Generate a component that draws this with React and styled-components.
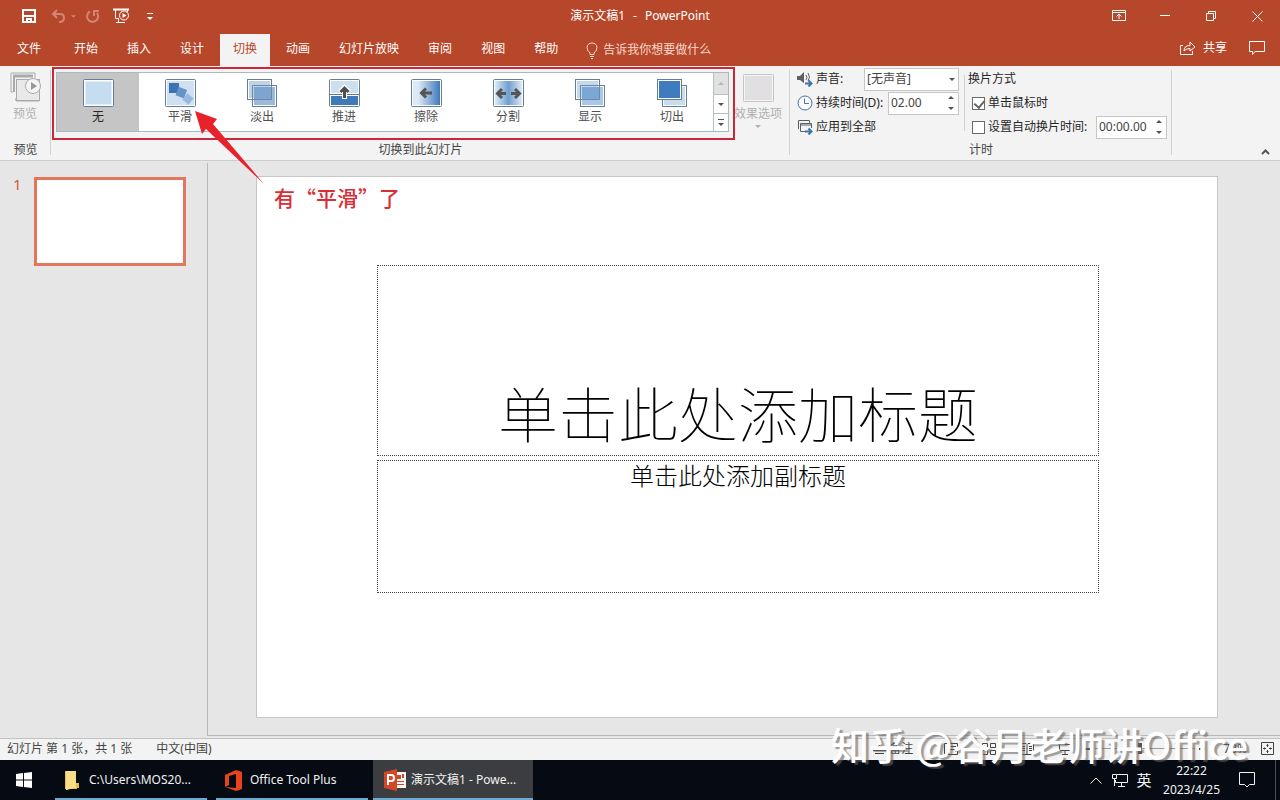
import React from "react";
import styled, { createGlobalStyle } from "styled-components";

const GlobalStyle = createGlobalStyle`
    * {
        box-sizing: border-box;
    }
    body {
        margin: 0;
        background: #e6e6e6;
        font: 12px/16px "Noto Sans", "Noto Sans CJK SC", sans-serif;
        color: #333333;
    }
    button, input, select {
        font: inherit;
        color: inherit;
        margin: 0;
        padding: 0;
        border: 0;
        background: none;
        border-radius: 0;
    }
    svg {
        display: block;
        flex: none;
    }
`;

const Window = styled.div`
    display: flex;
    flex-direction: column;
    min-height: 100vh;
`;

/* ---------- title bar ---------- */

const TitleBar = styled.header`
    display: grid;
    grid-template-columns: 1fr auto 1fr;
    align-items: center;
    height: 32px;
    background: #b7472a;
    color: #ffffff;
`;

const QuickAccess = styled.div`
    display: flex;
    align-items: center;
    padding-left: 21px;
`;

const QuickButton = styled.button`
    display: flex;
    justify-content: center;
    width: ${(p) => p.$width || 16}px;
    margin-right: ${(p) => p.$gap || 0}px;
    opacity: ${(p) => (p.disabled ? 0.35 : 1)};
`;

const DocTitle = styled.h1`
    display: flex;
    gap: 8px;
    margin: 0;
    font-size: 12px;
    font-weight: 400;
`;

const WindowControls = styled.div`
    display: flex;
    justify-content: flex-end;
`;

const WindowButton = styled.button`
    display: flex;
    align-items: center;
    justify-content: center;
    width: 46px;
    height: 32px;
`;

/* ---------- tabs ---------- */

const TabBar = styled.nav`
    display: flex;
    align-items: stretch;
    gap: 3px;
    height: 34px;
    padding-top: 2px;
    background: #b7472a;
    color: #ffffff;
`;

const Tab = styled.button`
    padding: 0 ${(p) => (p.$file ? 17 : 13)}px 2px;
    background: ${(p) => (p.$active ? "#f3f3f3" : "transparent")};
    color: ${(p) => (p.$active ? "#b7472a" : "#ffffff")};
    white-space: nowrap;
`;

const TellMe = styled.button`
    display: flex;
    align-items: center;
    gap: 5px;
    margin-left: 12px;
    color: #f6d9cf;
    white-space: nowrap;
`;

const TabActions = styled.div`
    display: flex;
    align-items: center;
    gap: 22px;
    margin-left: auto;
    padding: 0 15px 4px 0;
`;

const ActionButton = styled.button`
    display: flex;
    align-items: center;
    gap: 7px;
`;

/* ---------- ribbon ---------- */

const Ribbon = styled.section`
    display: flex;
    height: 95px;
    background: #f3f3f3;
    border-bottom: 1px solid #cccccc;
`;

const Group = styled.div`
    display: flex;
    flex-direction: column;
    justify-content: space-between;
    position: relative;
    width: ${(p) => p.$width}px;
    padding: ${(p) => p.$top || 6}px 0 2px;

    &::after {
        content: "";
        position: absolute;
        right: 0;
        top: 4px;
        bottom: 5px;
        width: 1px;
        background: #d2d2d2;
    }
`;

const GroupName = styled.div`
    color: #444444;
    text-align: center;
`;

const BigButton = styled.button`
    display: flex;
    flex-direction: column;
    align-items: center;
    gap: 3px;
    width: 50px;
    color: #b0b0b0;
    white-space: nowrap;
`;

const GalleryRow = styled.div`
    display: flex;
    gap: 4px;
    padding-left: 5px;
`;

const GalleryWrap = styled.div`
    position: relative;
`;

const Gallery = styled.div`
    display: flex;
    height: 60px;
    border: 1px solid #a9bcbc;
    background: #ffffff;
`;

const GalleryItem = styled.button`
    display: flex;
    flex-direction: column;
    align-items: center;
    gap: 2px;
    width: 82px;
    padding-top: 6px;
    background: ${(p) => (p.$active ? "#c5c5c5" : "transparent")};
    color: ${(p) => (p.$active ? "#262626" : "#505050")};
`;

const GalleryScroll = styled.div`
    display: grid;
    grid-template-rows: 21px 19px 18px;
    width: 15px;
    border-left: 1px solid #b6c2c2;
`;

const ScrollButton = styled.button`
    display: flex;
    align-items: center;
    justify-content: center;
    background: ${(p) => (p.disabled ? "#e1e1e1" : "#ffffff")};
    color: ${(p) => (p.disabled ? "#b5b5b5" : "#555555")};

    & + & {
        border-top: 1px solid #b6c2c2;
    }
`;

const HighlightFrame = styled.div`
    position: absolute;
    inset: -5px -6px -8px -4px;
    border: 2px solid #c8283a;
    pointer-events: none;
`;

const HighlightArrow = styled.svg`
    position: absolute;
    left: 136px;
    top: 38px;
    z-index: 2;
    pointer-events: none;
`;

const Timing = styled.div`
    display: flex;
    color: #262626;
    white-space: nowrap;
`;

const TimingColumn = styled.div`
    display: flex;
    flex-direction: column;
    padding: 0 5px 0 7px;
    width: ${(p) => p.$width}px;

    & ~ & {
        padding: 0 0 0 3px;
    }
`;

const TimingDivider = styled.div`
    width: 1px;
    margin: 8px 0;
    background: #d2d2d2;
`;

const TimingRow = styled.div`
    display: flex;
    align-items: center;
    gap: 3px;
    height: 24px;
    padding-left: ${(p) => p.$indent || 0}px;
`;

const PlainButton = styled.button`
    display: flex;
    align-items: center;
    gap: 3px;
`;

const Field = styled.div`
    display: flex;
    position: relative;
    width: ${(p) => p.$width}px;
    height: 23px;
    margin-left: auto;
    background: #ffffff;
    border: 1px solid #c6c6c6;

    input, select {
        width: 100%;
        padding-left: 2px;
        appearance: none;
        color: #444444;
        outline: none;
    }
`;

const SelectArrow = styled.span`
    position: absolute;
    right: 3px;
    top: 9px;
    color: #555555;
    pointer-events: none;
`;

const Stepper = styled.div`
    display: grid;
    flex: none;
    grid-template-rows: 1fr 1fr;
    width: 15px;
    color: #555555;

    button {
        display: flex;
        align-items: center;
        justify-content: center;
    }
`;

const Check = styled.input`
    appearance: none;
    flex: none;
    position: relative;
    width: 13px;
    height: 13px;
    background: #ffffff;
    border: 1px solid #6a6a6a;

    &:checked::after {
        content: "";
        position: absolute;
        left: 3px;
        top: 0;
        width: 5px;
        height: 8px;
        border: solid #666666;
        border-width: 0 2px 2px 0;
        transform: rotate(40deg);
    }
`;

const CollapseButton = styled.button`
    align-self: flex-end;
    margin-left: auto;
    padding: 0 10px 5px;
    color: #555555;
`;

/* ---------- workspace ---------- */

const Workspace = styled.main`
    display: flex;
    flex: 1;
    padding: 2px 0;
    background: #e6e6e6;
`;

const Thumbnails = styled.aside`
    display: flex;
    align-items: flex-start;
    gap: 13px;
    width: 207px;
    padding: 14px 21px 0 13px;
`;

const ThumbNumber = styled.span`
    width: 8px;
    font-size: 15px;
    line-height: 14px;
    color: #cf5a40;
`;

const Thumb = styled.button`
    flex: 1;
    height: 89px;
    background: #ffffff;
    border: 3px solid #e4775b;
`;

const SlidePane = styled.section`
    display: flex;
    flex: 1;
    padding: 13px 62px 17px 48px;
    border: solid #b9b9b9;
    border-width: 0 0 1px 1px;
`;

const Slide = styled.div`
    position: relative;
    display: flex;
    flex: 1;
    flex-direction: column;
    gap: 4px;
    padding: 88px 118px 124px 120px;
    background: #ffffff;
    border: 1px solid #c6c6c6;
`;

const TitleBox = styled.div`
    display: flex;
    flex: 182 0 0;
    align-items: flex-end;
    justify-content: center;
    padding-bottom: 7px;
    border: 1px dotted #444444;
    color: #000000;
    font-family: "Noto Sans CJK SC", sans-serif;
    font-size: 60px;
    font-weight: 100;
    line-height: 72px;
    white-space: nowrap;
`;

const SubtitleBox = styled(TitleBox)`
    flex: 131 0 0;
    align-items: flex-start;
    padding: 0;
    font-size: 24px;
    font-weight: 300;
    line-height: 28px;
`;

const Note = styled.p`
    position: absolute;
    left: 17px;
    top: 6px;
    margin: 0;
    color: #dc2c34;
    font: 500 21px/28px "Noto Sans CJK SC", sans-serif;
    white-space: nowrap;
`;

/* ---------- status bar ---------- */

const StatusBar = styled.footer`
    position: relative;
    display: flex;
    align-items: center;
    gap: 19px;
    height: 22px;
    padding: 0 6px 2px 7px;
    background: #f3f3f3;
    border-top: 1px solid #c3c3c3;
    color: #444444;
    white-space: nowrap;
`;

const StatusInfo = styled.div`
    display: flex;
    gap: 24px;
`;

const NotesButton = styled(PlainButton)`
    margin: 0 12px 0 auto;
`;

const ViewButtons = styled.div`
    display: flex;
    gap: 24px;
`;

const ZoomTools = styled.div`
    display: flex;
    align-items: center;
    gap: 4px;
    margin-left: -6px;
`;

const ZoomSlider = styled.input`
    appearance: none;
    width: 100px;
    height: 11px;
    background: linear-gradient(#9a9a9a, #9a9a9a) center / 100% 1px no-repeat;

    &::-webkit-slider-thumb {
        appearance: none;
        width: 4px;
        height: 11px;
        background: #555555;
    }
`;

const ZoomValue = styled.span`
    margin: 0 10px 0 14px;
`;

const Watermark = styled.div`
    position: absolute;
    right: 32px;
    top: -17px;
    z-index: 3;
    color: #ffffff;
    font: 500 38px/44px "Noto Sans CJK SC", sans-serif;
    text-shadow: 3px 2px 1px rgba(100, 100, 100, 0.6);
    white-space: nowrap;
    pointer-events: none;
`;

/* ---------- taskbar ---------- */

const Taskbar = styled.footer`
    display: flex;
    height: 40px;
    background: #060a12;
    color: #f2f2f2;
    white-space: nowrap;
`;

const StartButton = styled.button`
    display: flex;
    align-items: center;
    justify-content: center;
    width: 48px;
`;

const Tasks = styled.div`
    display: flex;
    padding-left: 7px;
`;

const TaskButton = styled.button`
    display: flex;
    align-items: center;
    gap: ${(p) => p.$gap || 8}px;
    width: ${(p) => p.$width || 152}px;
    margin-right: ${(p) => p.$after || 0}px;
    padding: 2px 0 0 ${(p) => (p.$active ? 11 : 9)}px;
    background: ${(p) => (p.$active ? "#3c3d41" : "transparent")};
    border-bottom: 2px solid #6fa9d0;
`;

const Tray = styled.div`
    display: flex;
    align-items: center;
    margin-left: auto;
    padding-right: 4px;
`;

const TrayButton = styled.button`
    display: flex;
    align-items: center;
    justify-content: center;
    width: 24px;
    height: 40px;
    font-size: 15px;
`;

const Clock = styled.div`
    padding: 0 19px 0 7px;
    line-height: 19px;
    text-align: center;
`;

const ActionCenter = styled.button`
    display: flex;
    align-items: center;
    height: 40px;
    padding-right: 20px;
    border-right: 1px solid #4a4d53;
`;

/* ---------- drawings ---------- */

const Caret = ({ up, bar, size = 6 }) => (
    <svg width={size} height={bar ? 7 : 3} viewBox={bar ? "0 0 6 7" : "0 0 6 3"} fill="currentColor">
        {bar && <rect width="6" height="1" />}
        <path d={up ? "M0 3L3 0L6 3Z" : bar ? "M0 4H6L3 7Z" : "M0 0H6L3 3Z"} />
    </svg>
);

const Line = ({ w = 16, h = 16, children, ...rest }) => (
    <svg width={w} height={h} viewBox={`0 0 ${w} ${h}`} fill="none" stroke="currentColor" {...rest}>
        {children}
    </svg>
);

const art = {
    none: <rect x="2.5" y="2.5" width="26" height="23" fill="#c6dcf0" stroke="none" />,
    morph: (
        <g stroke="none">
            <rect x="2" y="2" width="27" height="24" fill="#cfe0f3" />
            <rect x="4" y="4" width="10" height="10" fill="#3a72b4" />
            <rect x="12" y="9" width="9" height="9" fill="#6493c9" transform="rotate(20 16 13)" />
            <rect x="19" y="16" width="8" height="8" fill="#98b9df" transform="rotate(40 23 20)" />
        </g>
    ),
    push: (
        <g>
            <rect x="2" y="2" width="27" height="12" fill="#cbdff1" stroke="none" />
            <rect x="2" y="17" width="27" height="9" fill="#3f79b9" stroke="none" />
            <path d="M1 15.5H30" stroke="#5f7486" />
            <path d="M15.500 20V9M11 13L15.500 8.500L20 13" stroke="#ffffff" strokeWidth="5" />
            <path d="M15.500 19V9M11.500 13L15.500 9L19.500 13" stroke="#4c4c4c" strokeWidth="3" />
        </g>
    ),
    wipe: (
        <g>
            <rect x="2" y="2" width="27" height="24" fill="url(#wipe)" stroke="none" />
            <path d="M21 14H11M15 9.500L10.500 14L15 18.500" stroke="#555555" strokeWidth="3" />
        </g>
    ),
    split: (
        <g>
            <rect x="2" y="2" width="27" height="24" fill="url(#split)" stroke="none" />
            <path d="M13 14.500H5M9 10L4.500 14.500L9 19M18 14.500H26M22 10L26.500 14.500L22 19" stroke="#555555" strokeWidth="3" />
        </g>
    ),
};

const overlap = {
    fade: ["#bed3ea", "#9ab9dd", "#7ea5d2"],
    reveal: ["#c3d9ee", "#a9c7e6", "#79a7d6"],
    cut: ["#3f7cbf", "#c9dcef", "#3f7cbf"],
};

const TransitionIcon = ({ kind }) => {
    const tones = overlap[kind];
    return (
        <svg width="31" height="28" viewBox="0 0 31 28" fill="none" stroke="#657e91">
            <defs>
                <linearGradient id="wipe">
                    <stop offset="0.200" stopColor="#dce9f6" />
                    <stop offset="1" stopColor="#3f79bb" />
                </linearGradient>
                <linearGradient id="split">
                    <stop offset="0" stopColor="#dce9f6" />
                    <stop offset="0.500" stopColor="#6f9fd0" />
                    <stop offset="1" stopColor="#dce9f6" />
                </linearGradient>
            </defs>
            {tones ? (
                <g>
                    <rect x="5.500" y="6.500" width="24" height="21" fill="#ffffff" />
                    <rect x="7" y="8" width="21" height="18" fill={tones[1]} stroke="none" />
                    <rect x="0.500" y="0.500" width="24" height="20" fill="#ffffff" />
                    <rect x="2" y="2" width="21" height="17" fill={tones[0]} stroke="none" />
                    {kind !== "cut" && (
                        <g>
                            <rect x="7" y="8" width="18" height="13" fill={tones[2]} stroke="none" />
                            <path d="M5.500 20V6.500H24M24.500 7V20.500H6" stroke="#6f89a2" />
                        </g>
                    )}
                </g>
            ) : (
                <g>
                    <rect x="0.500" y="0.500" width="30" height="27" fill="#ffffff" rx="1" />
                    {art[kind]}
                </g>
            )}
        </svg>
    );
};

const PreviewIcon = () => (
    <svg width="31" height="31" viewBox="0 0 31 31" fill="none" stroke="#aaaaaa">
        <path d="M3 20H1V1H25V6" strokeWidth="1" />
        <path d="M3 4H23" strokeWidth="3" />
        <path d="M4 5V20" strokeWidth="2" />
        <rect x="6.500" y="7.500" width="23" height="21" fill="#e9e9e9" />
        <path d="M5 27H6V29H29" />
        <circle cx="23" cy="14" r="7.500" fill="#f5f5f5" />
        <path d="M21 10V18L27 14Z" fill="#999999" stroke="none" />
    </svg>
);

const SoundIcon = () => (
    <svg width="16" height="16" viewBox="0 0 16 16" fill="none">
        <path d="M0 5H3L7 1V12L3 9H0Z" fill="#606060" />
        <path d="M9 4Q11 6.500 9 9M11 2Q14 6.500 11 10" stroke="#606060" />
        <path d="M8 12.500H14M11.500 9.500L14.500 12.500L11.500 15.500" stroke="#3f74aa" strokeWidth="2" />
    </svg>
);

const ClockIcon = () => (
    <Line stroke="#4d7096">
        <circle cx="8" cy="8" r="7" fill="#f8fbff" />
        <path d="M7.500 3.500V8.500H12" />
    </Line>
);

const ApplyIcon = () => (
    <Line stroke="#55606c">
        <path d="M8 12.500H3.500V4.500H14.500V9M1.500 10V1.500H12.500V4M3.500 6H14" />
        <path d="M8 12.500H14M11.500 9.500L14.500 12.500L11.500 15.500" stroke="#3f74aa" strokeWidth="2" />
    </Line>
);

const FolderIcon = () => (
    <svg width="16" height="20" viewBox="0 0 16 20">
        <path d="M1 1H11V17H13V19H1Z" fill="#e8bf55" />
        <path d="M2 1H12V13H15V18H9L3 20H2Z" fill="#f9de88" />
        <path d="M12 13H15V18H12Z" fill="#e5b94b" />
    </svg>
);

const OfficeIcon = () => (
    <svg width="17" height="21" viewBox="0 0 17 21">
        <path d="M0 5L11 0L17 2V19L11 21L0 17L11 18V4L4 6V15L0 17Z" fill="#e8441a" />
    </svg>
);

const PowerPointIcon = () => (
    <svg width="22" height="22" viewBox="0 0 22 22">
        <rect x="11" y="3" width="11" height="16" fill="#f5f5f5" />
        <path d="M13 6H17V10H13ZM18 5H20V9H18ZM13 12H20V13H13ZM13 15H20V16H13Z" fill="#d24726" />
        <path d="M0 3L13 0V22L0 19Z" fill="#d24726" />
        <path d="M4 16V6H7.500Q10 6 10 9T7.500 12H4" stroke="#ffffff" strokeWidth="2" fill="none" />
    </svg>
);

const tabs = ["文件", "开始", "插入", "设计", "切换", "动画", "幻灯片放映", "审阅", "视图", "帮助"];

const transitions = [
    ["none", "无"],
    ["morph", "平滑"],
    ["fade", "淡出"],
    ["push", "推进"],
    ["wipe", "擦除"],
    ["split", "分割"],
    ["reveal", "显示"],
    ["cut", "切出"],
];

const TimeField = ({ id, label, width, value }) => (
    <Field $width={width}>
        <input id={id} type="text" aria-label={label} defaultValue={value} />
        <Stepper>
            <button aria-label="增加">
                <Caret up />
            </button>
            <button aria-label="减少">
                <Caret />
            </button>
        </Stepper>
    </Field>
);

const Header = () => (
    <>
        <TitleBar>
            <QuickAccess>
                <QuickButton aria-label="保存" $gap={13}>
                    <Line w={14} h={14} strokeWidth="2">
                        <path d="M1 1H13V13H1ZM1 7H13" />
                        <path d="M5 13V10H9V13" />
                    </Line>
                </QuickButton>
                <QuickButton aria-label="撤消" disabled $gap={4}>
                    <Line w={15} h={14} strokeWidth="2">
                        <path d="M6 1L2 5L6 9M2 5H9Q13 5 13 9T8 13" />
                    </Line>
                </QuickButton>
                <QuickButton aria-label="撤消列表" disabled $width={6} $gap={9}>
                    <Caret size={5} />
                </QuickButton>
                <QuickButton aria-label="恢复" disabled $gap={12}>
                    <Line w={14} h={14} strokeWidth="2">
                        <path d="M4 2.500A5.500 5.500 0 1 0 11 4M8 7V2H13" />
                    </Line>
                </QuickButton>
                <QuickButton aria-label="从头开始" $width={17} $gap={17}>
                    <Line w={17} h={16}>
                        <path d="M0 1.500H16" strokeWidth="2" />
                        <path d="M2.500 2V10.500H6M5.500 11V14.500M3 14.500H12M14.500 2V4" />
                        <circle cx="11" cy="7.500" r="4.500" />
                        <path d="M9.500 5V10L13.500 7.500Z" fill="currentColor" stroke="none" />
                    </Line>
                </QuickButton>
                <QuickButton aria-label="自定义快速访问工具栏" $width={6}>
                    <Caret bar />
                </QuickButton>
            </QuickAccess>
            <DocTitle>
                <span>演示文稿1</span>
                <span>-</span>
                <span>PowerPoint</span>
            </DocTitle>
            <WindowControls>
                <WindowButton aria-label="功能区显示选项">
                    <Line w={14} h={12}>
                        <path d="M0.500 0.500H13.500V10.500H0.500ZM1 2.500H13M7 9V4M4.500 6.500L7 4L9.500 6.500" />
                    </Line>
                </WindowButton>
                <WindowButton aria-label="最小化">
                    <Line w={10} h={2}>
                        <path d="M0 0.500H10" />
                    </Line>
                </WindowButton>
                <WindowButton aria-label="还原">
                    <Line w={10} h={10}>
                        <path d="M0.500 2.500H7.500V9.500H0.500ZM2.500 2V0.500H9.500V7.500H8" />
                    </Line>
                </WindowButton>
                <WindowButton aria-label="关闭">
                    <Line w={11} h={11}>
                        <path d="M0.500 0.500L10.500 10.500M10.500 0.500L0.500 10.500" />
                    </Line>
                </WindowButton>
            </WindowControls>
        </TitleBar>
        <TabBar>
            {tabs.map((name, i) => (
                <Tab key={name} $file={i === 0} $active={name === "切换"}>
                    {name}
                </Tab>
            ))}
            <TellMe>
                <Line w={12} h={17}>
                    <path d="M4 12.500V11Q1 8.500 1 5.500Q1.500 1 6 1T11 5.500Q11 8.500 8 11V12.500ZM4 14.500H8M5 16.500H7" />
                </Line>
                告诉我你想要做什么
            </TellMe>
            <TabActions>
                <ActionButton>
                    <Line>
                        <path d="M3 5.500H0.500V14.500H12.500V11M4 11Q4 5.500 10 5.500V2L15 7L10 11V8.500Q6 8.500 4 11Z" />
                    </Line>
                    共享
                </ActionButton>
                <ActionButton aria-label="批注">
                    <Line w={16} h={14}>
                        <path d="M0.500 0.500H15.500V10.500H6L3.500 13.500V10.500H0.500Z" />
                    </Line>
                </ActionButton>
            </TabActions>
        </TabBar>
    </>
);

const TransitionRibbon = () => (
    <Ribbon>
        <Group $width={51}>
            <BigButton disabled>
                <PreviewIcon />
                预览
            </BigButton>
            <GroupName>预览</GroupName>
        </Group>
        <Group $width={739}>
            <GalleryRow>
                <GalleryWrap>
                    <Gallery>
                        {transitions.map(([kind, name]) => (
                            <GalleryItem key={kind} $active={kind === "none"}>
                                <TransitionIcon kind={kind} />
                                {name}
                            </GalleryItem>
                        ))}
                        <GalleryScroll>
                            <ScrollButton aria-label="上一行" disabled>
                                <Caret up />
                            </ScrollButton>
                            <ScrollButton aria-label="下一行">
                                <Caret />
                            </ScrollButton>
                            <ScrollButton aria-label="其他">
                                <Caret bar />
                            </ScrollButton>
                        </GalleryScroll>
                    </Gallery>
                    <HighlightFrame />
                    <HighlightArrow width="76" height="76" viewBox="0 0 76 76">
                        <path d="M3 1L25 9L21 14L72 74L14 19L10 24Z" fill="#e8222b" />
                    </HighlightArrow>
                </GalleryWrap>
                <BigButton disabled>
                    <svg width="31" height="31" viewBox="0 0 31 31">
                        <rect x="0.500" y="2.500" width="30" height="27" rx="1" fill="#f6f6f6" stroke="#c4c4c4" />
                        <rect x="2" y="4" width="27" height="24" fill="#e2dfe2" />
                    </svg>
                    效果选项
                    <Caret />
                </BigButton>
            </GalleryRow>
            <GroupName>切换到此幻灯片</GroupName>
        </Group>
        <Group $width={382} $top={1}>
            <Timing>
                <TimingColumn $width={174}>
                    <TimingRow>
                        <SoundIcon />
                        <label htmlFor="sound">声音:</label>
                        <Field $width={95}>
                            <select id="sound">
                                <option>[无声音]</option>
                            </select>
                            <SelectArrow>
                                <Caret />
                            </SelectArrow>
                        </Field>
                    </TimingRow>
                    <TimingRow>
                        <ClockIcon />
                        <label htmlFor="duration">持续时间(D):</label>
                        <TimeField id="duration" width={71} value="02.00" />
                    </TimingRow>
                    <TimingRow>
                        <PlainButton>
                            <ApplyIcon />
                            应用到全部
                        </PlainButton>
                    </TimingRow>
                </TimingColumn>
                <TimingDivider />
                <TimingColumn $width={202}>
                    <TimingRow>换片方式</TimingRow>
                    <TimingRow $indent={4}>
                        <Check id="onClick" type="checkbox" defaultChecked />
                        <label htmlFor="onClick">单击鼠标时</label>
                    </TimingRow>
                    <TimingRow $indent={4}>
                        <Check id="auto" type="checkbox" />
                        <label htmlFor="auto">设置自动换片时间:</label>
                        <TimeField id="autoTime" label="自动换片时间" width={71} value="00:00.00" />
                    </TimingRow>
                </TimingColumn>
            </Timing>
            <GroupName>计时</GroupName>
        </Group>
        <CollapseButton aria-label="折叠功能区">
            <Line w={9} h={6} strokeWidth="2">
                <path d="M1 5L4.500 1.500L8 5" />
            </Line>
        </CollapseButton>
    </Ribbon>
);

const Status = () => (
    <StatusBar>
        <StatusInfo>
            <span>幻灯片 第 1 张，共 1 张</span>
            <span>中文(中国)</span>
        </StatusInfo>
        <NotesButton>
            <Line w={13} h={12}>
                <path d="M0 7.500H13M2 10.500H11M4 5L6.500 2L9 5Z" />
            </Line>
            备注
        </NotesButton>
        <ViewButtons>
            <PlainButton aria-label="普通视图">
                <Line w={14} h={12}>
                    <path d="M0.500 0.500H13.500V11.500H0.500ZM4.500 1V11M6 3.500H12M6 6.500H12V9" />
                </Line>
            </PlainButton>
            <PlainButton aria-label="幻灯片浏览">
                <Line w={14} h={12}>
                    <path d="M0.500 0.500H5.500V4.500H0.500ZM8.500 0.500H13.500V4.500H8.500ZM0.500 7.500H5.500V11.500H0.500ZM8.500 7.500H13.500V11.500H8.500Z" />
                </Line>
            </PlainButton>
            <PlainButton aria-label="阅读视图">
                <Line w={14} h={12}>
                    <path d="M0.500 0.500H6L7 1.500L8 0.500H13.500V11.500H0.500ZM7 2V11M2 3.500H5M2 5.500H5M2 7.500H5M9 3.500H12M9 5.500H12M9 7.500H12" />
                </Line>
            </PlainButton>
            <PlainButton aria-label="幻灯片放映">
                <Line w={14} h={12}>
                    <path d="M0 1.500H14M1.500 2V7.500H12.500V2M7 8V11M4 11.500H10" />
                </Line>
            </PlainButton>
        </ViewButtons>
        <ZoomTools>
            <PlainButton aria-label="缩小">
                <Line w={6} h={2}>
                    <path d="M0 1H6" strokeWidth="2" />
                </Line>
            </PlainButton>
            <ZoomSlider type="range" aria-label="显示比例" defaultValue={44} />
            <PlainButton aria-label="放大">
                <Line w={6} h={6} strokeWidth="2">
                    <path d="M0 3H6M3 0V6" />
                </Line>
            </PlainButton>
            <ZoomValue>73%</ZoomValue>
            <PlainButton aria-label="适应窗口">
                <Line w={13} h={13}>
                    <path d="M0.500 0.500H12.500V12.500H0.500ZM6.500 2V5M6.500 8V11M2 6.500H5M8 6.500H11" />
                    <path d="M5.500 3.500L6.500 2.500L7.500 3.500M5.500 9.500L6.500 10.500L7.500 9.500M3.500 5.500L2.500 6.500L3.500 7.500M9.500 5.500L10.500 6.500L9.500 7.500" />
                </Line>
            </PlainButton>
        </ZoomTools>
        <Watermark>知乎 @谷月老师讲Office</Watermark>
    </StatusBar>
);

const SystemBar = () => (
    <Taskbar>
        <StartButton aria-label="开始菜单">
            <svg width="16" height="16" viewBox="0 0 16 16" fill="#ffffff">
                <path d="M0 2L7 1V7.500H0ZM8 1L16 0V7.500H8ZM0 8.500H7V15L0 14ZM8 8.500H16V16L8 15Z" />
            </svg>
        </StartButton>
        <Tasks>
            <TaskButton $after={9} $gap={9}>
                <FolderIcon />
                C:\Users\MOS20...
            </TaskButton>
            <TaskButton $after={5}>
                <OfficeIcon />
                Office Tool Plus
            </TaskButton>
            <TaskButton $width={160} $gap={5} $active>
                <PowerPointIcon />
                演示文稿1 - Powe...
            </TaskButton>
        </Tasks>
        <Tray>
            <TrayButton aria-label="显示隐藏的图标">
                <Line w={12} h={7}>
                    <path d="M0.500 6.500L6 1L11.500 6.500" />
                </Line>
            </TrayButton>
            <TrayButton aria-label="网络">
                <Line w={16} h={14}>
                    <path d="M5 1.500H15.500V9.500H3.500V7M9.500 10V13M6 13.500H13M0.500 1.500H4.500V5.500H0.500ZM2.500 6V13" />
                </Line>
            </TrayButton>
            <TrayButton>英</TrayButton>
            <Clock>
                22:22
                <br />
                2023/4/25
            </Clock>
            <ActionCenter aria-label="操作中心">
                <Line w={16} h={16}>
                    <path d="M0.500 0.500H15.500V12.500H10.500L8 15L5.500 12.500H0.500Z" />
                </Line>
            </ActionCenter>
        </Tray>
    </Taskbar>
);

export default function App() {
    return (
        <Window>
            <GlobalStyle />
            <Header />
            <TransitionRibbon />
            <Workspace>
                <Thumbnails>
                    <ThumbNumber>1</ThumbNumber>
                    <Thumb aria-label="幻灯片 1" />
                </Thumbnails>
                <SlidePane>
                    <Slide>
                        <TitleBox>单击此处添加标题</TitleBox>
                        <SubtitleBox>单击此处添加副标题</SubtitleBox>
                        <Note lang="zh-CN">有“平滑”了</Note>
                    </Slide>
                </SlidePane>
            </Workspace>
            <Status />
            <SystemBar />
        </Window>
    );
}
